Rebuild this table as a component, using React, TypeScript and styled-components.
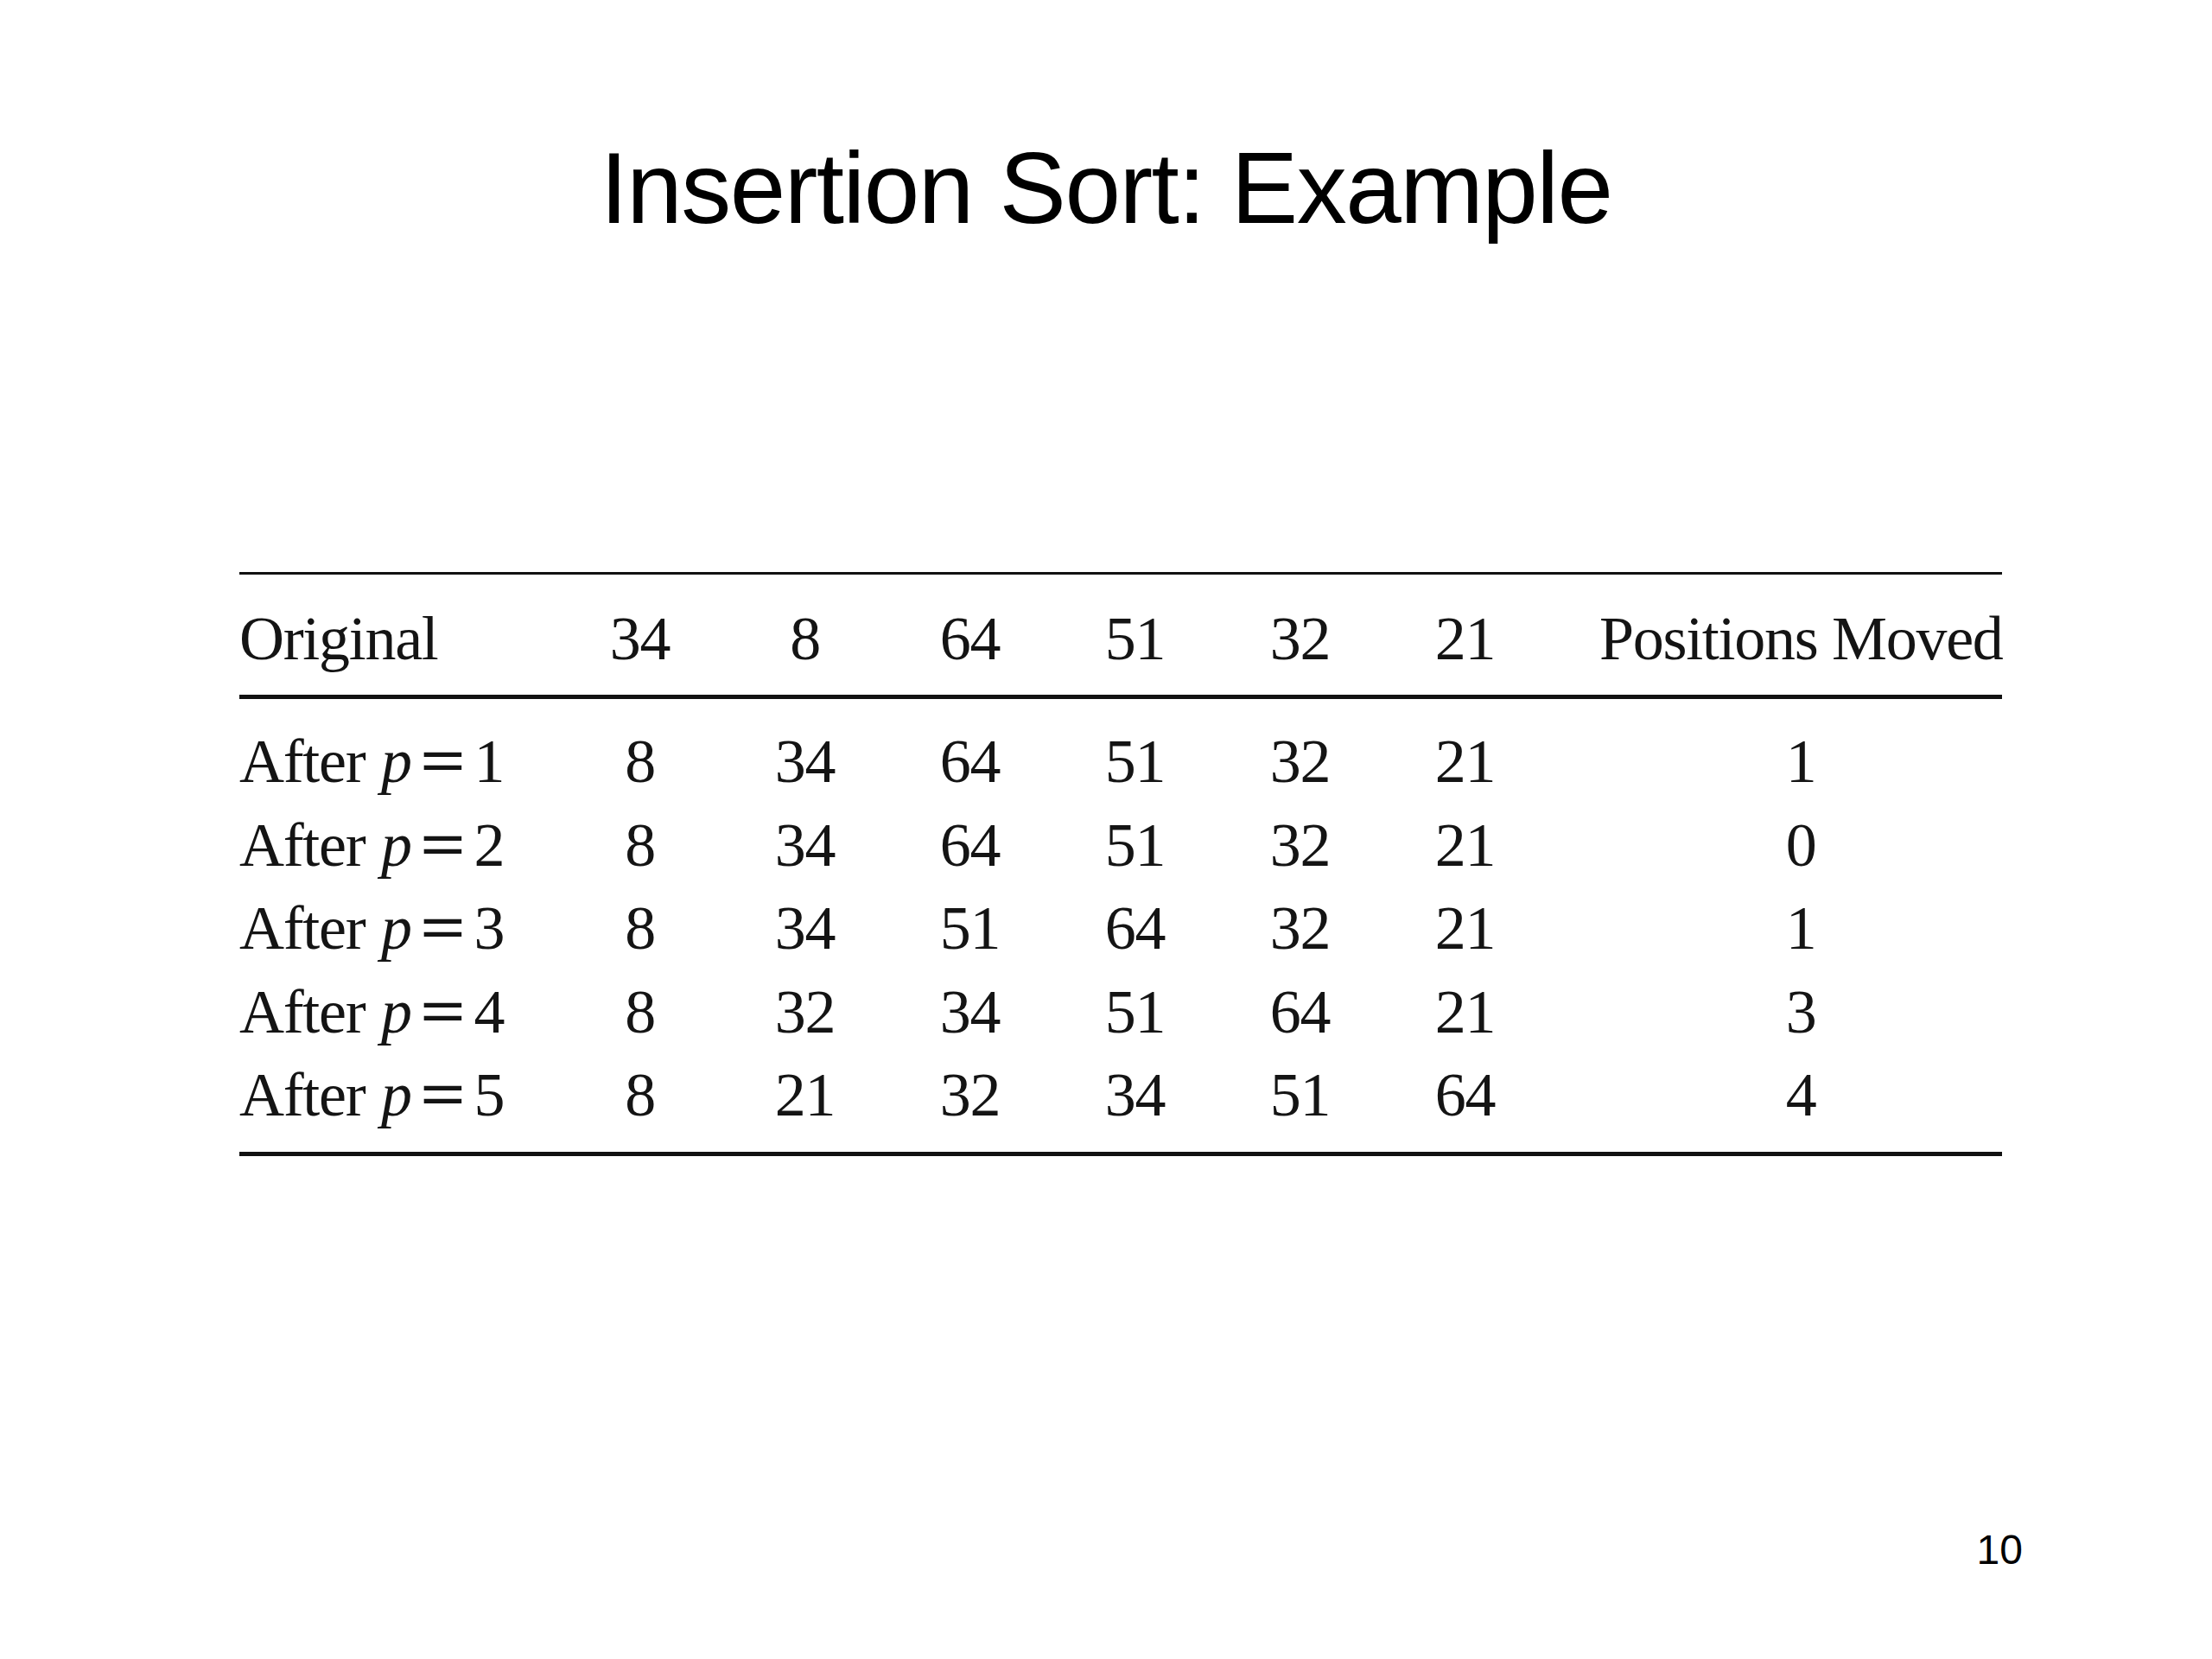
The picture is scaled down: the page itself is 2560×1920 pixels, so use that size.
import React from "react";
import styled, { createGlobalStyle } from "styled-components";

const GlobalStyle = createGlobalStyle`
  html, body {
    margin: 0;
    padding: 0;
    background: #ffffff;
  }
  body {
    font-family: "Liberation Sans", Arial, sans-serif;
    color: #000;
  }
`;

const Slide = styled.div`
  width: 2560px;
  height: 1920px;
  display: flex;
  flex-direction: column;
  background: #ffffff;
  box-sizing: border-box;
  padding-top: 153px;
`;

const Title = styled.h1`
  margin: 0;
  font-family: "Liberation Sans", Arial, sans-serif;
  font-weight: 400;
  font-size: 116px;
  letter-spacing: -1.5px;
  line-height: 130px;
  text-align: center;
  color: #000;
`;

const Table = styled.div`
  margin-top: 379px;
  margin-left: 277px;
  width: 2040px;
  border-top: 3px solid #111;
  border-bottom: 5px solid #111;
  font-family: "Liberation Serif", "Times New Roman", serif;
  font-size: 72px;
  letter-spacing: -1.3px;
  color: #141414;
`;

const Grid = styled.div<{ $rowHeight: number }>`
  display: grid;
  grid-template-columns: 368px repeat(6, 191px) 1fr;
  line-height: ${(p) => p.$rowHeight}px;
  height: ${(p) => p.$rowHeight}px;
`;

const HeadSection = styled.div`
  padding: 26px 0 17px;
  border-bottom: 5px solid #111;
`;

const BodySection = styled.div`
  padding: 24px 0 17px;
`;

const LabelCell = styled.div`
  text-align: left;
  white-space: nowrap;
`;

const NumCell = styled.div`
  text-align: center;
  white-space: nowrap;
`;

const MovedCell = styled.div`
  padding-left: 60px;
  text-align: center;
  white-space: nowrap;
`;

const Var = styled.i`
  font-style: italic;
  margin-left: 2px;
`;

const Eq = styled.span`
  display: inline-block;
  margin: 0 17px 0 16px;
  transform: scale(1.3, 1.05);
  font-weight: 700;
`;

const Footer = styled.div`
  margin-top: auto;
  padding: 0 219px 98px 0;
  display: flex;
  justify-content: flex-end;
`;

const PageNum = styled.span`
  font-family: "Liberation Sans", Arial, sans-serif;
  font-size: 48px;
  line-height: 56px;
  color: #000;
`;

const header = ["34", "8", "64", "51", "32", "21"];

const rows: { p: number; values: string[]; moved: string }[] = [
  { p: 1, values: ["8", "34", "64", "51", "32", "21"], moved: "1" },
  { p: 2, values: ["8", "34", "64", "51", "32", "21"], moved: "0" },
  { p: 3, values: ["8", "34", "51", "64", "32", "21"], moved: "1" },
  { p: 4, values: ["8", "32", "34", "51", "64", "21"], moved: "3" },
  { p: 5, values: ["8", "21", "32", "34", "51", "64"], moved: "4" },
];

export default function App() {
  return (
    <>
      <GlobalStyle />
      <Slide>
        <Title>Insertion Sort: Example</Title>
        <Table>
          <HeadSection>
            <Grid $rowHeight={96}>
              <LabelCell>Original</LabelCell>
              {header.map((v, i) => (
                <NumCell key={i}>{v}</NumCell>
              ))}
              <MovedCell>Positions Moved</MovedCell>
            </Grid>
          </HeadSection>
          <BodySection>
            {rows.map((r) => (
              <Grid $rowHeight={96.5} key={r.p}>
                <LabelCell>
                  After<Var> p</Var>
                  <Eq>=</Eq>
                  {r.p}
                </LabelCell>
                {r.values.map((v, i) => (
                  <NumCell key={i}>{v}</NumCell>
                ))}
                <MovedCell>{r.moved}</MovedCell>
              </Grid>
            ))}
          </BodySection>
        </Table>
        <Footer>
          <PageNum>10</PageNum>
        </Footer>
      </Slide>
    </>
  );
}
